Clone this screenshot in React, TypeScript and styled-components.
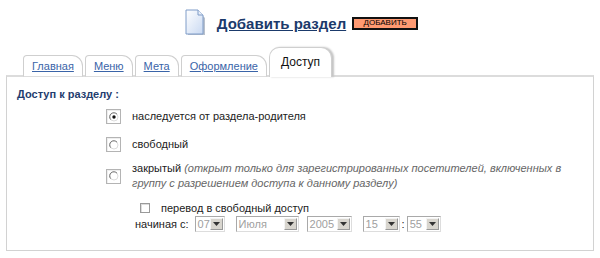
import styled, { createGlobalStyle } from 'styled-components'

const GlobalStyle = createGlobalStyle`
  body {
    margin: 0;
    background: #fff;
    font-family: "Liberation Sans", Arial, sans-serif;
    font-size: 11px;
    color: #222;
  }
`

const Page = styled.div`
  width: 600px;
  height: 258px;
  overflow: hidden;
`

const Header = styled.div`
  display: flex;
  justify-content: center;
  align-items: center;
  gap: 10px;
  height: 44px;
  padding-left: 2px;
`

const Title = styled.a`
  font-size: 15px;
  font-weight: bold;
  color: #1b3a6b;
  text-decoration: underline;
  margin: 2px -4px 0 1px;
`

const AddButton = styled.button`
  font-family: "Liberation Sans", Arial, sans-serif;
  font-size: 8px;
  line-height: 8px;
  padding: 0;
  width: 66px;
  height: 13px;
  background: #ff9a72;
  border: 2px solid #111;
  color: #000;
  margin-top: 2px;
`

const TabBar = styled.div`
  display: flex;
  align-items: flex-end;
  height: 31px;
  padding-left: 23px;
  position: relative;
  z-index: 1;
`

const Tab = styled.div<{ $active?: boolean }>`
  display: flex;
  align-items: center;
  justify-content: center;
  box-sizing: border-box;
  height: ${(p) => (p.$active ? 30 : 22)}px;
  padding: ${(p) => (p.$active ? '0 11px 2px 11px' : '0 8px')};
  margin-bottom: -2px;
  background: #fff;
  border: 1px solid #cfcfcf;
  border-bottom: ${(p) => (p.$active ? 'none' : '1px solid #ddd')};
  border-radius: ${(p) => (p.$active ? '10px 11px 0 0' : '4px 11px 0 0')};
  box-shadow: ${(p) => (p.$active ? '2px 0 2px #c4c4c4' : 'none')};
  font-size: ${(p) => (p.$active ? 12 : 11)}px;
  color: ${(p) => (p.$active ? '#111' : '#3a64a8')};
  text-decoration: ${(p) => (p.$active ? 'none' : 'underline')};
  & + & {
    margin-left: ${(p) => (p.$active ? 2 : -1)}px;
  }
`

const Panel = styled.div`
  margin: 0 6px;
  height: 176px;
  border: 1px solid #d2d2d2;
  border-top: 2px solid #dcdcdc;
  padding: 11px 10px 0;
  box-sizing: border-box;
`

const Heading = styled.div`
  font-weight: bold;
  color: #1f3d6e;
  font-size: 11px;
  margin-bottom: 9px;
`

const Options = styled.div`
  display: flex;
  flex-direction: column;
  padding-left: 89px;
`

const Option = styled.div<{ $mt: number }>`
  display: flex;
  align-items: center;
  gap: 11px;
  margin-top: ${(p) => p.$mt}px;
`

const RadioBox = styled.span`
  flex: none;
  width: 15px;
  height: 15px;
  box-sizing: border-box;
  border: 1px solid #b4b4b4;
  box-shadow: inset 1px 1px 0 #eee;
  background: #fff;
  display: flex;
  align-items: center;
  justify-content: center;
`

const Label = styled.div`
  color: #222;
  line-height: 15px;
`

const Line = styled.div``

const Note = styled.i`
  color: #666;
`

const SubBlock = styled.div`
  padding-left: 118px;
  margin-top: 10px;
  display: flex;
  flex-direction: column;
  gap: 2px;
`

const CheckRow = styled.div`
  display: flex;
  align-items: center;
  gap: 11px;
  height: 13px;
  padding-left: 5px;
`

const CheckBox = styled.span`
  width: 10px;
  height: 10px;
  box-sizing: border-box;
  border: 1px solid #9a9a9a;
  box-shadow: inset 1px 1px 0 #ddd;
  background: #fff;
`

const DateRow = styled.div`
  display: flex;
  align-items: center;
`

const DateLabel = styled.span`
  margin-right: 6px;
`

const Select = styled.div<{ $w: number; $gap: number }>`
  width: ${(p) => p.$w}px;
  height: 16px;
  margin-left: ${(p) => p.$gap}px;
  box-sizing: border-box;
  border: 1px solid #a9a9a9;
  border-right-color: #ddd;
  border-bottom-color: #ddd;
  background: #fff;
  display: flex;
  align-items: center;
  justify-content: space-between;
  padding-left: 2px;
  color: #a0a0a0;
  font-size: 11px;
`

const Arrow = styled.span`
  width: 13px;
  height: 12px;
  margin-right: 1px;
  background: #d8d5ce;
  border: 1px solid;
  border-color: #f4f4f4 #999 #999 #f4f4f4;
  box-sizing: border-box;
  display: flex;
  align-items: center;
  justify-content: center;
`

const Colon = styled.span`
  margin: 0 2px;
`

const PageIcon = () => (
  <svg width="22" height="27" viewBox="0 0 22 27">
    <defs>
      <linearGradient id="pg" x1="0" y1="0" x2="1" y2="1">
        <stop offset="0" stopColor="#ffffff" />
        <stop offset="1" stopColor="#c9d9f2" />
      </linearGradient>
    </defs>
    <path d="M3 2 H14 L20 8 V25 H3 Z" fill="#b8c0cc" transform="translate(1 1)" />
    <path d="M2 1 H14 L19 6 V25 H2 Z" fill="url(#pg)" stroke="#7f9cc8" strokeWidth="1" />
    <path d="M14 1 V6 H19" fill="#e8eef8" stroke="#7f9cc8" strokeWidth="1" />
  </svg>
)

const Radio = ({ checked }: { checked?: boolean }) => (
  <RadioBox>
    <svg width="10" height="10" viewBox="0 0 10 10">
      <circle cx="5" cy="5" r="4" fill="#fff" stroke="#dcdcdc" strokeWidth="1" />
      <path d="M8 2.2 A4 4 0 0 0 1.6 7.6" fill="none" stroke="#777" strokeWidth="1" />
      {checked && <circle cx="5" cy="5" r="1.7" fill="#111" />}
    </svg>
  </RadioBox>
)

const Triangle = () => (
  <svg width="7" height="4" viewBox="0 0 7 4">
    <path d="M0 0 H7 L3.5 4 Z" fill="#333" />
  </svg>
)

const selects = [
  { v: '07', w: 30, gap: 0 },
  { v: 'Июля', w: 63, gap: 11 },
  { v: '2005', w: 45, gap: 8 },
  { v: '15', w: 37, gap: 11 },
]

export default function App() {
  return (
    <Page>
      <GlobalStyle />
      <Header>
        <PageIcon />
        <Title>Добавить раздел</Title>
        <AddButton>ДОБАВИТЬ</AddButton>
      </Header>
      <TabBar>
        <Tab>Главная</Tab>
        <Tab>Меню</Tab>
        <Tab>Мета</Tab>
        <Tab>Оформление</Tab>
        <Tab $active>Доступ</Tab>
      </TabBar>
      <Panel>
        <Heading>Доступ к разделу :</Heading>
        <Options>
          <Option $mt={0}>
            <Radio checked />
            <Label>наследуется от раздела-родителя</Label>
          </Option>
          <Option $mt={13}>
            <Radio />
            <Label>свободный</Label>
          </Option>
          <Option $mt={9}>
            <Radio />
            <Label>
              <Line>
                закрытый <Note>(открыт только для зарегистрированных посетителей, включенных в</Note>
              </Line>
              <Line>
                <Note>группу с разрешением доступа к данному разделу)</Note>
              </Line>
            </Label>
          </Option>
        </Options>
        <SubBlock>
          <CheckRow>
            <CheckBox />
            <span>перевод в свободный доступ</span>
          </CheckRow>
          <DateRow>
            <DateLabel>начиная с:</DateLabel>
            {selects.map((s) => (
              <Select key={s.v} $w={s.w} $gap={s.gap}>
                {s.v}
                <Arrow>
                  <Triangle />
                </Arrow>
              </Select>
            ))}
            <Colon>:</Colon>
            <Select $w={34} $gap={0}>
              55
              <Arrow>
                <Triangle />
              </Arrow>
            </Select>
          </DateRow>
        </SubBlock>
      </Panel>
    </Page>
  )
}
